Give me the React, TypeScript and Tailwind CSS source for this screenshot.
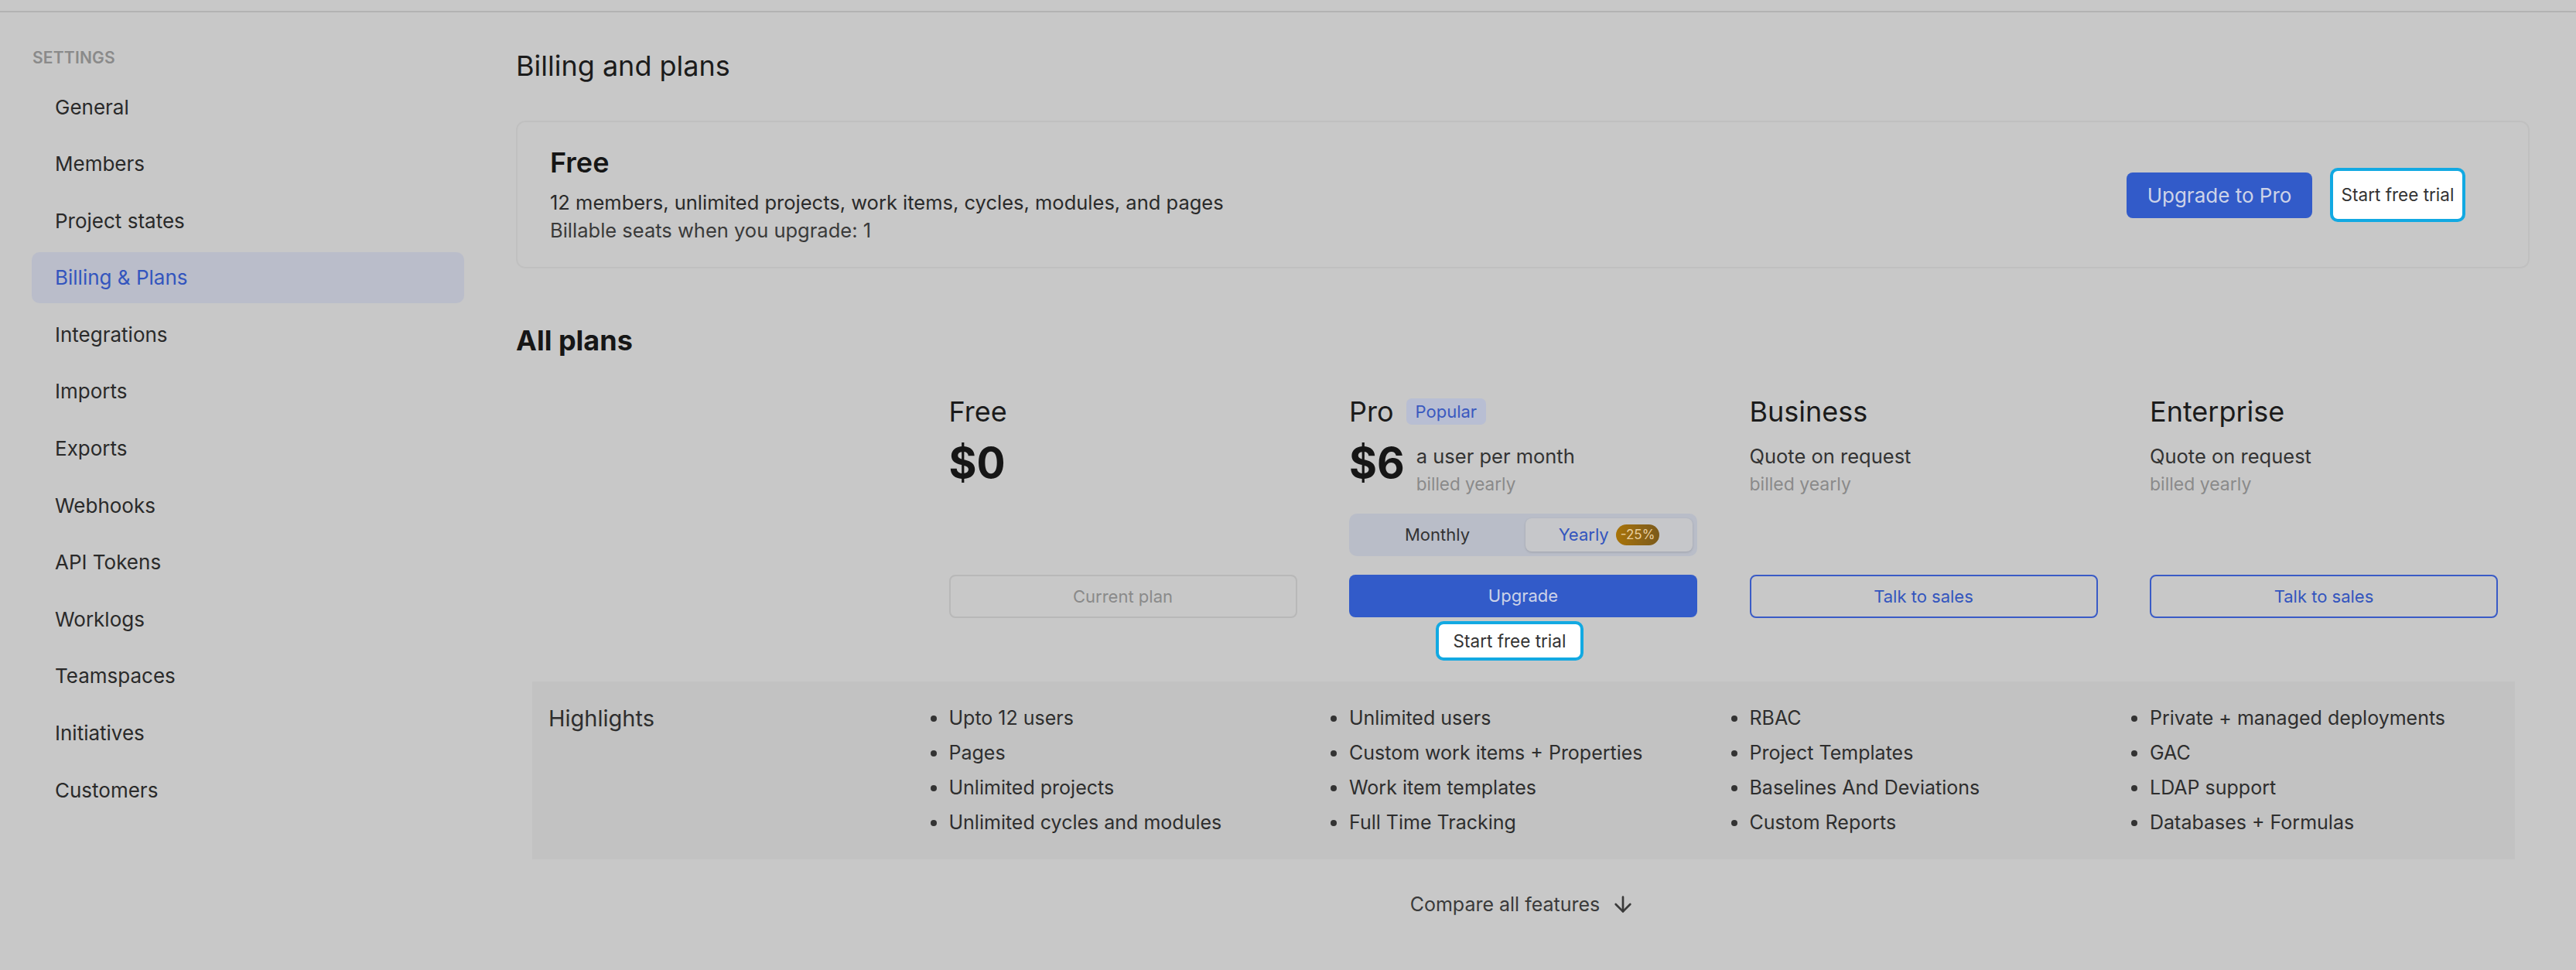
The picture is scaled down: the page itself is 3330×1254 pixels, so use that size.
import { ArrowDown } from 'lucide-react';

const navItems = [
	'General',
	'Members',
	'Project states',
	'Billing & Plans',
	'Integrations',
	'Imports',
	'Exports',
	'Webhooks',
	'API Tokens',
	'Worklogs',
	'Teamspaces',
	'Initiatives',
	'Customers',
];

const highlights = [
	['Upto 12 users', 'Pages', 'Unlimited projects', 'Unlimited cycles and modules'],
	['Unlimited users', 'Custom work items + Properties', 'Work item templates', 'Full Time Tracking'],
	['RBAC', 'Project Templates', 'Baselines And Deviations', 'Custom Reports'],
	['Private + managed deployments', 'GAC', 'LDAP support', 'Databases + Formulas'],
];

function TrialButton({ className }: { className: string }) {
	return (
		<button
			className={`flex items-center justify-center rounded-[10px] border-[4px] border-[#12a9e2] bg-white text-[22.5px] text-[#333] ${className}`}
		>
			Start free trial
		</button>
	);
}

function Sidebar() {
	return (
		<aside className="w-[667px] shrink-0 pl-[41px] pt-[44px]">
			<div className="pl-[1px] text-[21px] font-semibold uppercase leading-[30px] tracking-[0.2px] text-[#8a8a8a]">
				Settings
			</div>
			<nav className="mt-[15px] flex flex-col gap-[7.6px]">
				{navItems.map((item) => (
					<div
						key={item}
						className={`flex h-[66px] w-[559px] items-center rounded-[10px] pl-[30px] text-[26px] ${
							item === 'Billing & Plans'
								? 'bg-[#babdca] text-[#3355be]'
								: 'text-[#2a2a2a]'
						}`}
					>
						{item}
					</div>
				))}
			</nav>
		</aside>
	);
}

function PlanColumn({ name }: { name: string }) {
	const isPro = name === 'Pro';
	return (
		<div className="flex flex-col">
			<div className="flex h-[44px] items-center gap-[16px]">
				<span className="text-[36px] text-[#1b1b1b]">{name}</span>
				{isPro && (
					<span className="flex h-[34px] items-center rounded-[7px] bg-[#b8bed3] px-[12px] text-[22px] text-[#3a59bf]">
						Popular
					</span>
				)}
			</div>
			<div className="mt-[14px] h-[86px]">
				{name === 'Free' && (
					<div className="text-[55px] font-bold leading-[60px] text-[#161616]">$0</div>
				)}
				{isPro && (
					<div className="flex items-start gap-[15px]">
						<div className="text-[55px] font-bold leading-[60px] text-[#161616]">$6</div>
						<div className="pt-[4px]">
							<div className="text-[25.5px] leading-[36px] text-[#333]">a user per month</div>
							<div className="text-[22.5px] leading-[36px] text-[#8a8a8a]">billed yearly</div>
						</div>
					</div>
				)}
				{(name === 'Business' || name === 'Enterprise') && (
					<div className="pt-[4px]">
						<div className="text-[25.5px] leading-[36px] text-[#333]">Quote on request</div>
						<div className="text-[23px] leading-[36px] text-[#8a8a8a]">billed yearly</div>
					</div>
				)}
			</div>
			<div className="h-[89px] pt-[10px]">
				{isPro && (
					<div className="grid h-[55px] grid-cols-2 gap-[6px] rounded-[10px] bg-[#b9bdc8] p-[6px]">
						<div className="flex items-center justify-center text-[22px] text-[#333]">Monthly</div>
						<div className="flex items-center justify-center gap-[9px] rounded-[8px] bg-[#c6c7ca] shadow-[0_1px_3px_rgba(0,0,0,0.15)]">
							<span className="text-[22px] text-[#3355be]">Yearly</span>
							<span className="flex h-[27px] items-center rounded-full bg-gradient-to-r from-[#a87306] to-[#7b5a1a] px-[6px] text-[17px] text-[#e9cf9f]">
								-25%
							</span>
						</div>
					</div>
				)}
			</div>
			{name === 'Free' && (
				<button className="h-[56px] rounded-[8px] border-2 border-[#b8b8b8] text-[22px] text-[#8a8a8a]">
					Current plan
				</button>
			)}
			{isPro && (
				<>
					<button className="h-[55px] rounded-[8px] bg-[#325bc9] text-[22px] text-[#cdd3e8]">
						Upgrade
					</button>
					<TrialButton className="ml-[112px] mt-[5px] h-[51px] w-[191px]" />
				</>
			)}
			{(name === 'Business' || name === 'Enterprise') && (
				<button className="h-[56px] rounded-[8px] border-2 border-[#3a5bc6] text-[22px] text-[#3355be]">
					Talk to sales
				</button>
			)}
		</div>
	);
}

export default function App() {
	return (
		<div className="flex h-[1254px] w-[3330px] flex-col overflow-hidden bg-[#c8c8c8] font-['Inter',sans-serif]">
			<div className="h-[16px] shrink-0 border-b-2 border-[#b3b3b3]" />
			<div className="flex flex-1">
				<Sidebar />
				<main className="flex-1 pr-[60px] pt-[47px]">
					<h1 className="text-[36px] leading-[44px] text-[#1b1b1b]">Billing and plans</h1>
					<section className="mt-[49px] flex items-center justify-between rounded-[12px] border-2 border-[#c0c0c0] pb-[29px] pl-[42px] pr-[81px] pt-[30px]">
						<div>
							<h2 className="text-[36px] font-semibold leading-[44px] text-[#161616]">Free</h2>
							<p className="mt-[12px] text-[25.5px] leading-[36px] text-[#2a2a2a]">
								12 members, unlimited projects, work items, cycles, modules, and pages
							</p>
							<p className="text-[25.5px] leading-[36px] text-[#3a3a3a]">
								Billable seats when you upgrade: 1
							</p>
						</div>
						<div className="flex items-center gap-[23px]">
							<button className="h-[59px] w-[240px] rounded-[8px] bg-[#325bc9] text-[26px] text-[#cdd3e8]">
								Upgrade to Pro
							</button>
							<TrialButton className="h-[70px] w-[175px]" />
						</div>
					</section>

					<h2 className="mt-[71px] text-[36px] font-bold leading-[44px] text-[#161616]">All plans</h2>
					<div className="mt-[48px] grid grid-cols-[450px_450px_450px_450px_450px] gap-x-[67.5px] pl-[42px]">
						<div />
						{['Free', 'Pro', 'Business', 'Enterprise'].map((p) => (
							<PlanColumn key={p} name={p} />
						))}
					</div>

					<div className="ml-[21px] mr-[19px] mt-[27px] grid grid-cols-[450px_450px_450px_450px_450px] gap-x-[67.5px] bg-[#c2c2c2] py-[25px] pl-[21px]">
						<div className="text-[29px] leading-[45px] text-[#2e2e2e]">Highlights</div>
						{highlights.map((col, i) => (
							<ul key={i}>
								{col.map((h) => (
									<li key={h} className="flex items-center text-[25px] leading-[45px] text-[#2e2e2e]">
										<span className="-ml-[24px] mr-[16px] h-[8px] w-[8px] rounded-full bg-[#333]" />
										{h}
									</li>
								))}
							</ul>
						))}
					</div>

					<div className="mt-[38px] flex items-center justify-center gap-[14px] text-[25px] leading-[40px] text-[#3a3a3a]">
						<span>Compare all features</span>
						<ArrowDown size={32} strokeWidth={2} />
					</div>
				</main>
			</div>
		</div>
	);
}
